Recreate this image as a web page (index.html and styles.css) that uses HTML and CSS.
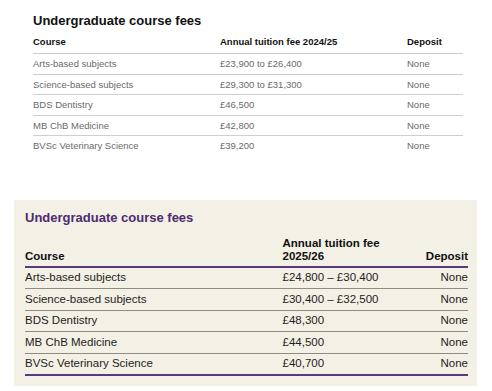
FILE: index.html
```html
<!DOCTYPE html>
<html lang="en">
<head>
<meta charset="utf-8">
<title>Undergraduate course fees</title>
<link rel="stylesheet" href="styles.css">
</head>
<body>
<section class="old">
  <h2 class="old-title">Undergraduate course fees</h2>
  <table class="old-table">
    <thead>
      <tr><th class="c1">Course</th><th class="c2">Annual tuition fee 2024/25</th><th class="c3">Deposit</th></tr>
    </thead>
    <tbody>
      <tr><td>Arts-based subjects</td><td>£23,900 to £26,400</td><td>None</td></tr>
      <tr><td>Science-based subjects</td><td>£29,300 to £31,300</td><td>None</td></tr>
      <tr><td>BDS Dentistry</td><td>£46,500</td><td>None</td></tr>
      <tr><td>MB ChB Medicine</td><td>£42,800</td><td>None</td></tr>
      <tr><td>BVSc Veterinary Science</td><td>£39,200</td><td>None</td></tr>
    </tbody>
  </table>
</section>
<section class="new">
  <h2 class="new-title">Undergraduate course fees</h2>
  <table class="new-table">
    <thead>
      <tr><th class="n1">Course</th><th class="n2">Annual tuition fee<br>2025/26</th><th class="n3">Deposit</th></tr>
    </thead>
    <tbody>
      <tr><td>Arts-based subjects</td><td>£24,800 – £30,400</td><td class="r">None</td></tr>
      <tr><td>Science-based subjects</td><td>£30,400 – £32,500</td><td class="r">None</td></tr>
      <tr><td>BDS Dentistry</td><td>£48,300</td><td class="r">None</td></tr>
      <tr><td>MB ChB Medicine</td><td>£44,500</td><td class="r">None</td></tr>
      <tr><td>BVSc Veterinary Science</td><td>£40,700</td><td class="r">None</td></tr>
    </tbody>
  </table>
</section>
</body>
</html>
```
FILE: styles.css
```css
html, body {
  margin: 0;
  padding: 0;
  background: #ffffff;
  font-family: "Liberation Sans", Arial, Helvetica, sans-serif;
}

.old {
  padding: 13px 0 0 33px;
  width: 430px;
}

.old-title {
  margin: 0;
  font-size: 13px;
  line-height: 15px;
  font-weight: bold;
  color: #111;
}

.old-table {
  margin-top: 8px;
  width: 430px;
  border-collapse: collapse;
  table-layout: fixed;
  font-size: 9.5px;
}

.old-table th {
  text-align: left;
  font-weight: bold;
  color: #111;
  padding: 0 0 6px 0;
  line-height: 11px;
  border-bottom: 1px solid #cfcfcf;
}

.old-table .c1 { width: 187px; }
.old-table .c2 { width: 187px; }
.old-table .c3 { width: 56px; }

.old-table td {
  color: #6a6a6a;
  padding: 0;
  height: 19.5px;
  line-height: 11px;
  vertical-align: middle;
  border-bottom: 1px solid #cfcfcf;
}

.old-table tbody tr:last-child td {
  border-bottom: none;
}

.new {
  margin: 44px 0 0 14px;
  width: 463px;
  height: 186px;
  box-sizing: border-box;
  padding: 10px 9px 0 11px;
  background: #f3f0e5;
}

.new-title {
  margin: 0;
  font-size: 13px;
  line-height: 15px;
  font-weight: bold;
  color: #4e2a70;
}

.new-table {
  margin-top: 12px;
  width: 443px;
  border-collapse: collapse;
  table-layout: fixed;
  font-size: 11.5px;
}

.new-table th {
  text-align: left;
  vertical-align: bottom;
  font-weight: bold;
  color: #111;
  line-height: 13.5px;
  padding: 0 0 2px 0;
  border-bottom: 2px solid #5a3a7c;
}

.new-table .n1 { width: 257.5px; }
.new-table .n2 { width: 135.5px; }
.new-table .n3 { width: 50px; text-align: right; }

.new-table td {
  color: #1e1e1e;
  padding: 0;
  height: 20.5px;
  line-height: 13px;
  vertical-align: middle;
  border-bottom: 1px solid #8f8c84;
}

.new-table td.r {
  text-align: right;
}

.new-table tbody tr:last-child td {
  border-bottom: 2px solid #5a3a7c;
}
```
